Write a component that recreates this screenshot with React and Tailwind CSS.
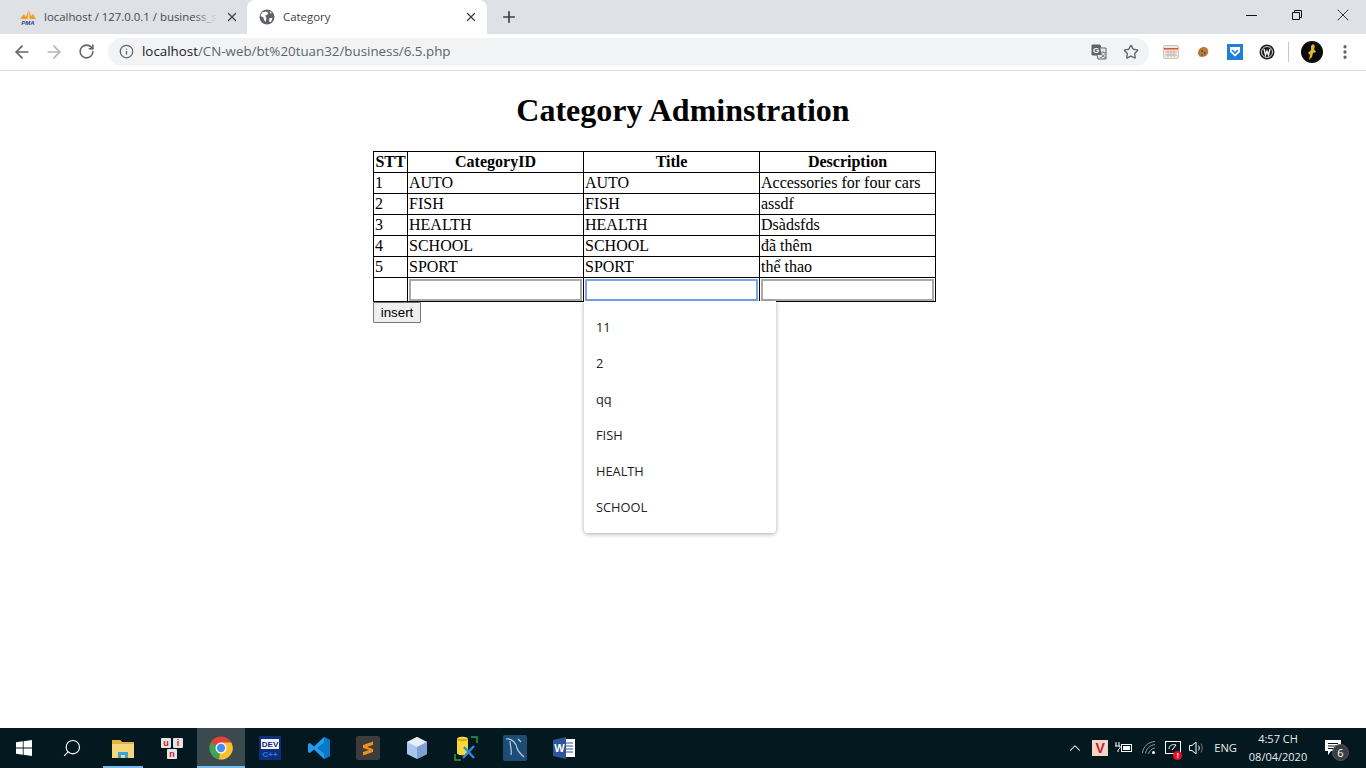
import { ArrowLeft, ArrowRight, ChevronUp, EllipsisVertical, Info, Plus, RotateCw, Search, Star, X } from "lucide-react"

const uiFont = "font-['Open_Sans','Noto_Sans',sans-serif]"

const rows = [
    ["1", "AUTO", "AUTO", "Accessories for four cars"],
    ["2", "FISH", "FISH", "assdf"],
    ["3", "HEALTH", "HEALTH", "Dsàdsfds"],
    ["4", "SCHOOL", "SCHOOL", "đã thêm"],
    ["5", "SPORT", "SPORT", "thể thao"],
]

const suggestions = ["11", "2", "qq", "FISH", "HEALTH", "SCHOOL"]

const PmaIcon = () => (
    <svg width="18" height="16" viewBox="0 0 18 16">
        <path d="M1 10 L5 5 L7 8 L9.5 1 L12 7 L14 5 L17 10 Z" fill="#f29a2e" />
        <path d="M9.5 1 L8.5 10 L11 10 Z" fill="#fbd38a" />
        <text x="9" y="15.5" textAnchor="middle" fontSize="6" fontWeight="700" fontStyle="italic" fill="#24488f" fontFamily="Liberation Sans">PMA</text>
    </svg>
)

const GlobeIcon = () => (
    <svg width="16" height="16" viewBox="0 0 16 16">
        <circle cx="8" cy="8" r="7.5" fill="#5f6368" />
        <path d="M3 3.5 L7 2.5 L9.5 4 L8 6 L6 6.5 L7.5 9 L6.5 13 L5 11 L4.5 8.5 L1.5 7 Z M10.5 9 L13.5 9 L12 13 L10 12.5 Z M10.5 2 L13 4 L11.5 4.5 Z" fill="#fff" />
    </svg>
)

const TranslateIcon = () => (
    <svg width="16" height="16" viewBox="0 0 16 16">
        <path d="M1 1 H9 L10 4 H15 V15 H7 L6 11 H1 Z" fill="#e8eaed" stroke="#5f6368" />
        <path d="M1 1 H9 L10.5 11 H1 Z" fill="#5f6368" />
        <text x="5" y="9" textAnchor="middle" fontSize="8" fontWeight="700" fill="#fff" fontFamily="Liberation Sans">G</text>
        <text x="12" y="13" textAnchor="middle" fontSize="7" fill="#5f6368" fontFamily="Noto Sans CJK SC">文</text>
    </svg>
)

const Keyboard = () => (
    <svg width="16" height="16" viewBox="0 0 16 16">
        <rect x="0.5" y="1.5" width="15" height="13" rx="1.5" fill="#eeeae2" stroke="#c9c5bd" />
        <rect x="1" y="4" width="14" height="1.5" fill="#e8502a" />
        <path d="M2 8 H14 M2 11 H14 M5 6 V13 M8 6 V13 M11 6 V13" stroke="#bdb9b0" />
    </svg>
)

const Cookie = () => (
    <svg width="14" height="14" viewBox="0 0 14 14">
        <path d="M2 8 C2 4 5 2 8 2 C11 2 13 5 12 8 C11 11 8 12 6 12 C4 12 2 11 2 8 Z" fill="#b87a3f" />
        <circle cx="6" cy="6" r="1" fill="#6e4420" />
        <circle cx="9" cy="8" r="1" fill="#6e4420" />
        <circle cx="6" cy="10" r="0.8" fill="#6e4420" />
    </svg>
)

const Pocket = () => (
    <svg width="16" height="16" viewBox="0 0 16 16">
        <rect width="16" height="16" fill="#1e7fdb" />
        <path d="M3 3 H13 V8 L8 12.5 L3 8 Z" fill="#fff" />
        <path d="M5 6 L8 9 L11 6" fill="none" stroke="#1e7fdb" strokeWidth="1.6" />
    </svg>
)

const WIcon = () => (
    <svg width="16" height="16" viewBox="0 0 16 16">
        <circle cx="8" cy="8" r="7.5" fill="#1c1c1c" />
        <circle cx="8" cy="8" r="5.5" fill="none" stroke="#d5d5d5" />
        <path d="M5 5 L6.5 11 L8 7 L9.5 11 L11 5" fill="none" stroke="#fff" strokeWidth="1.3" />
    </svg>
)

const Avatar = () => (
    <svg width="22" height="22" viewBox="0 0 22 22">
        <circle cx="11" cy="11" r="11" fill="#0b0b0b" />
        <path d="M12 3 L14 5 L13 8 L15 11 L12 12 L11 16 L8 19 L9 14 L7 12 L10 9 L10 5 Z" fill="#e2b52c" />
    </svg>
)

const RestoreIcon = () => (
    <svg width="10" height="10" viewBox="0 0 10 10" fill="none" stroke="#111" strokeWidth="1">
        <path d="M0.5 2.5 H7.5 V9.5 H0.5 Z M2.5 2.5 V0.5 H9.5 V7.5 H7.5" />
    </svg>
)

const WindowsLogo = () => (
    <svg width="16" height="16" viewBox="0 0 16 16" fill="#fff">
        <path d="M0 2.3 L6.8 1.3 V7.6 H0 Z M7.6 1.2 L16 0 V7.6 H7.6 Z M0 8.4 H6.8 V14.7 L0 13.7 Z M7.6 8.4 H16 V16 L7.6 14.8 Z" />
    </svg>
)

const FolderIcon = () => (
    <svg width="22" height="20" viewBox="0 0 22 20">
        <path d="M0 2 H8 L10 4 H22 V20 H0 Z" fill="#f6d67a" />
        <path d="M0 2 H8 L10 4 H22 V6 H0 Z" fill="#e4b13f" />
        <path d="M6 20 V14 H16 V20 H13 V17 H9 V20 Z" fill="#37a3dd" />
    </svg>
)

const UniKeyIcon = () => (
    <svg width="24" height="24" viewBox="0 0 24 24">
        <rect x="1" y="2" width="10" height="10" rx="1" fill="#e5e5e5" />
        <rect x="13" y="2" width="10" height="10" rx="1" fill="#e5e5e5" />
        <rect x="7" y="13" width="10" height="10" rx="1" fill="#e5e5e5" />
        <text x="6" y="10" textAnchor="middle" fontSize="9" fontWeight="700" fill="#c3202a" fontFamily="Liberation Sans">u</text>
        <text x="18" y="10" textAnchor="middle" fontSize="9" fontWeight="700" fill="#c3202a" fontFamily="Liberation Sans">i</text>
        <text x="12" y="21" textAnchor="middle" fontSize="9" fontWeight="700" fill="#c3202a" fontFamily="Liberation Sans">n</text>
    </svg>
)

const ChromeIcon = () => (
    <svg width="24" height="24" viewBox="0 0 24 24">
        <circle cx="12" cy="12" r="11.5" fill="#e5423a" />
        <path d="M12 12 L1.8 6.7 A11.5 11.5 0 0 0 10 23.3 Z" fill="#3aa757" />
        <path d="M12 6.5 H22.3 A11.5 11.5 0 0 1 10 23.3 L12 12 Z" fill="#fbc02d" />
        <circle cx="12" cy="12" r="5.5" fill="#fff" />
        <circle cx="12" cy="12" r="4.2" fill="#4a8af4" />
    </svg>
)

const DevIcon = () => (
    <svg width="22" height="24" viewBox="0 0 22 24">
        <rect width="22" height="24" fill="#0f2f7c" />
        <rect x="2" y="3" width="18" height="10" fill="#f1f3f8" />
        <text x="11" y="11" textAnchor="middle" fontSize="8" fontWeight="700" fill="#0f2f7c" fontFamily="Liberation Sans">DEV</text>
        <text x="11" y="21" textAnchor="middle" fontSize="8" fontWeight="700" fill="#2b7fe6" fontFamily="Liberation Sans">C++</text>
    </svg>
)

const VsCodeIcon = () => (
    <svg width="24" height="24" viewBox="0 0 24 24">
        <path d="M17 1 L23 4 V20 L17 23 L7 13.5 L3 17 L1 16 V8 L3 7 L7 10.5 Z M17 7 L11 12 L17 17 Z" fill="#1f9cf0" />
        <path d="M17 1 L23 4 V20 L17 23 Z M17 7 V17 L11 12 Z" fill="#0a78c9" fillRule="evenodd" />
    </svg>
)

const SublimeIcon = () => (
    <svg width="24" height="24" viewBox="0 0 24 24">
        <rect width="24" height="24" rx="2" fill="#3c3c3c" />
        <path d="M7 9 L17 5.5 V9 L11 11 L17 13 V16 L7 19.5 V16 L13 14 L7 12 Z" fill="#f28c1c" />
    </svg>
)

const CubeIcon = () => (
    <svg width="22" height="24" viewBox="0 0 22 24">
        <path d="M11 1 L21 6 V18 L11 23 L1 18 V6 Z" fill="#a9c6ee" />
        <path d="M11 1 L21 6 L11 11 L1 6 Z" fill="#e6eff5" />
        <path d="M11 11 L21 6 V18 L11 23 Z" fill="#7f9fd6" />
    </svg>
)

const DbToolIcon = () => (
    <svg width="24" height="26" viewBox="0 0 24 26">
        <path d="M3 4 C3 1 14 1 14 4 V18 C14 21 3 21 3 18 Z" fill="#f5d93c" />
        <path d="M3 4 C3 7 14 7 14 4" fill="#d3a82a" />
        <path d="M17 2 H23 V8 M1 19 V25 H7" fill="none" stroke="#2c9b47" strokeWidth="1.5" />
        <path d="M9 23 L20 11 M10 12 L20 23" stroke="#2b8ad8" strokeWidth="2.4" />
    </svg>
)

const WorkbenchIcon = () => (
    <svg width="24" height="26" viewBox="0 0 24 26">
        <rect width="24" height="26" rx="2" fill="#1d4c74" />
        <path d="M3 4 C9 3 13 8 14 13 C15 17 18 19 21 22 M7 6 C7 11 9 14 8 20 M15 4 L18 7" fill="none" stroke="#b9cfe0" strokeWidth="1.2" />
    </svg>
)

const WordIcon = () => (
    <svg width="22" height="22" viewBox="0 0 22 22">
        <rect x="8" y="2" width="14" height="18" fill="#fff" />
        <path d="M12 6 H20 M12 9 H20 M12 12 H20 M12 15 H20" stroke="#2b5797" />
        <path d="M0 3 L13 0 V22 L0 19 Z" fill="#2b5797" />
        <text x="6.5" y="15" textAnchor="middle" fontSize="11" fontWeight="700" fill="#fff" fontFamily="Liberation Sans">W</text>
    </svg>
)

const BatteryIcon = () => (
    <svg width="18" height="14" viewBox="0 0 18 14" fill="none" stroke="#fff">
        <path d="M1 1 V5 M4 1 V5 M0 5 H5 V7 L3 9 V11" />
        <rect x="6.5" y="3.5" width="10" height="7" />
        <rect x="8" y="5" width="7" height="4" fill="#fff" stroke="none" />
    </svg>
)

const WifiIcon = () => (
    <svg width="14" height="14" viewBox="0 0 14 14" fill="none" stroke="#8f9a9e">
        <path d="M0.5 12 C1 6 6 1 13 0.5 M3.5 12.5 C4 8 8 4 13 3.5 M6.5 13 C7 10.5 9.5 7.5 13 7" />
        <circle cx="11.5" cy="11.5" r="1.5" fill="#fff" stroke="none" />
    </svg>
)

const DisplayAlertIcon = () => (
    <span className="relative flex">
        <svg width="16" height="15" viewBox="0 0 16 15" fill="none" stroke="#fff">
            <rect x="0.5" y="0.5" width="15" height="12" />
            <path d="M4 8 C4 4 8 3 11 4 M7 9 L11 4" />
        </svg>
        <span className="absolute right-[-1px] bottom-[-4px] flex h-[9px] w-[9px] items-center justify-center rounded-full bg-[#e81123] text-[7px] font-bold leading-none text-white">!</span>
    </span>
)

const VolumeIcon = () => (
    <svg width="16" height="14" viewBox="0 0 16 14" fill="none" stroke="#fff">
        <path d="M0.5 4.5 H3 L7 1 V13 L3 9.5 H0.5 Z" />
        <path d="M9.5 4.5 C10.5 6 10.5 8 9.5 9.5" />
        <path d="M12 2.5 C13.5 5 13.5 9 12 11.5" stroke="#6d7a7f" />
    </svg>
)

const Tab = ({ icon, title, active = false }) => (
    <div className={`relative flex h-[34px] w-[240px] shrink-0 items-center rounded-t-lg ${active ? "bg-white pl-[8px] pr-[9px]" : "bg-[#dee1e6] pl-[12px] pr-[5px]"}`}>
        <span className="flex w-[24px] shrink-0 justify-center">{icon}</span>
        <span className={`ml-[4px] min-w-0 flex-1 whitespace-nowrap text-[11.4px] ${active ? "text-[#3c4043]" : "text-[#45494d]"}`}>{title}</span>
        {!active && <span className="absolute left-[188px] top-0 h-full w-[32px] bg-gradient-to-r from-transparent to-[#dee1e6] to-80%" />}
        <X size={14} strokeWidth={2.2} className="relative ml-[4px] shrink-0 text-[#3c4043]" />
    </div>
)

const TaskIcon = ({ children, active = false, open = false, width = "w-[49px]" }) => (
    <div className={`relative flex h-full shrink-0 items-center justify-center ${width} ${active ? "bg-[#3a4a4e]" : ""}`}>
        {children}
        {(active || open) && <span className="absolute inset-x-0 bottom-0 h-[2px] bg-[#76b9ed]" />}
    </div>
)

const App = () => (
    <div className={`flex h-screen w-full flex-col overflow-hidden bg-white ${uiFont}`}>
        {/* tab strip */}
        <div className="flex h-[34px] shrink-0 items-center bg-[#dee1e6] pl-[4px]">
            <Tab icon={<PmaIcon />} title="localhost / 127.0.0.1 / business_se" />
            <span className="w-[3px] shrink-0" />
            <Tab active icon={<GlobeIcon />} title="Category" />
            <Plus size={18} strokeWidth={2.2} className="ml-[13px] text-[#3c4043]" />
            <div className="ml-auto flex h-full items-start">
                <div className="flex h-[30px] w-[46px] items-center justify-center"><span className="h-px w-[11px] bg-[#111]" /></div>
                <div className="flex h-[30px] w-[46px] items-center justify-center"><RestoreIcon /></div>
                <div className="flex h-[30px] w-[46px] items-center justify-center"><X size={20} strokeWidth={1} className="text-[#111]" /></div>
            </div>
        </div>

        {/* toolbar */}
        <div className="flex h-[37px] shrink-0 items-center border-b border-[#dadce0] bg-white pb-[1px] pl-[12px] pr-[12px]">
            <ArrowLeft size={20} strokeWidth={2} className="text-[#5f6368]" />
            <ArrowRight size={20} strokeWidth={2} className="ml-[12px] text-[#b3b6ba]" />
            <RotateCw size={17} strokeWidth={2.2} className="ml-[14px] text-[#5f6368]" />
            <div className="ml-[13px] flex h-[28px] w-[1041px] shrink-0 items-center rounded-full bg-[#f1f3f4] pl-[11px] pr-[10px]">
                <Info size={15} strokeWidth={2} className="shrink-0 text-[#5f6368]" />
                <span className="ml-[8px] pt-px text-[13.35px] leading-none text-[#5f6368]"><span className="text-[#202124]">localhost</span>/CN-web/bt%20tuan32/business/6.5.php</span>
                <span className="ml-auto flex items-center gap-[16px]">
                    <TranslateIcon />
                    <Star size={16} strokeWidth={2} className="text-[#5f6368]" />
                </span>
            </div>
            <div className="ml-[14px] flex items-center gap-[16px]">
                <Keyboard />
                <span className="flex w-[16px] justify-center"><Cookie /></span>
                <Pocket />
                <WIcon />
            </div>
            <span className="ml-[13px] h-[20px] w-px bg-[#c4c7ca]" />
            <span className="ml-[12px] flex"><Avatar /></span>
            <EllipsisVertical size={18} strokeWidth={2.4} className="ml-[13px] text-[#5f6368]" />
        </div>

        {/* page */}
        <main className="relative flex-1 font-['Liberation_Serif',serif] text-[16px] leading-[18px] text-black">
            <h1 className="mt-[21px] mb-[22px] text-center text-[32px] font-bold leading-[37px]">Category Adminstration</h1>
            <div className="ml-[373px] w-[563px]">
                <table className="w-[562px] table-fixed border-collapse border border-black">
                    <colgroup>
                        <col className="w-[34px]" />
                        <col className="w-[176px]" />
                        <col className="w-[176px]" />
                        <col className="w-[176px]" />
                    </colgroup>
                    <thead>
                        <tr className="h-[21px]">
                            {["STT", "CategoryID", "Title", "Description"].map((head) => (
                                <th key={head} className="border border-black p-0 px-px text-center font-bold">{head}</th>
                            ))}
                        </tr>
                    </thead>
                    <tbody>
                        {rows.map((row) => (
                            <tr key={row[0]} className="h-[21px]">
                                {row.map((cell, i) => (
                                    <td key={i} className="border border-black p-0 px-px">{cell}</td>
                                ))}
                            </tr>
                        ))}
                        <tr className="h-[24px]">
                            <td className="border border-black p-0" />
                            <td className="border border-black p-0 px-px"><input className="block h-[22px] w-full border-2 border-[#a9a9a9] bg-white outline-none" /></td>
                            <td className="border border-black p-0 px-px"><input className="block h-[22px] w-full rounded-[1px] border-2 border-[#7ba4e8] bg-white outline-none" /></td>
                            <td className="border border-black p-0 px-px"><input className="block h-[22px] w-full border-2 border-[#a9a9a9] bg-white outline-none" /></td>
                        </tr>
                    </tbody>
                </table>
                <button type="button" className="block h-[21px] w-[48px] rounded-[1px] border border-[#767676] bg-[#efefef] font-['Liberation_Sans',sans-serif] text-[13.33px] leading-none text-black">insert</button>
            </div>

            {/* autofill suggestions */}
            <div className="absolute left-[584px] top-[230px] w-[192px] rounded-b-[4px] bg-white py-[8px] shadow-[0_1px_4px_rgba(60,64,67,0.45)]">
                {suggestions.map((item) => (
                    <div key={item} className={`flex h-[36px] items-center pl-[12px] text-[12.8px] text-[#202124] ${uiFont}`}>{item}</div>
                ))}
            </div>
        </main>

        {/* taskbar */}
        <div className="flex h-[40px] shrink-0 items-center bg-[#04181f]">
            <TaskIcon width="w-[48px]"><WindowsLogo /></TaskIcon>
            <TaskIcon width="w-[48px]"><Search size={20} strokeWidth={1.4} className="-scale-x-100 text-white" /></TaskIcon>
            <span className="w-[7px] shrink-0" />
            <TaskIcon open width="w-[40px]"><FolderIcon /></TaskIcon>
            <span className="w-[5px] shrink-0" />
            <TaskIcon width="w-[48px]"><UniKeyIcon /></TaskIcon>
            <span className="w-px shrink-0" />
            <TaskIcon active width="w-[48px]"><ChromeIcon /></TaskIcon>
            <TaskIcon><DevIcon /></TaskIcon>
            <TaskIcon><VsCodeIcon /></TaskIcon>
            <TaskIcon><SublimeIcon /></TaskIcon>
            <TaskIcon><CubeIcon /></TaskIcon>
            <TaskIcon><DbToolIcon /></TaskIcon>
            <TaskIcon><WorkbenchIcon /></TaskIcon>
            <TaskIcon><WordIcon /></TaskIcon>

            <div className="ml-auto flex h-full items-center text-white">
                <ChevronUp size={18} strokeWidth={1.4} />
                <span className="ml-[8px] flex h-[16px] w-[16px] items-center justify-center bg-[#f3d6c8] font-['Liberation_Sans',sans-serif] text-[14px] font-bold leading-none text-[#c8222a]">V</span>
                <span className="ml-[7px] flex"><BatteryIcon /></span>
                <span className="ml-[9px] flex"><WifiIcon /></span>
                <span className="ml-[9px] flex"><DisplayAlertIcon /></span>
                <span className="ml-[8px] flex"><VolumeIcon /></span>
                <span className="ml-[9px] text-[11.2px] text-[#e8ecee]">ENG</span>
                <div className="ml-[12px] flex w-[58px] flex-col items-center text-[11px] leading-[18px] text-[#e8ecee]">
                    <span>4:57 CH</span>
                    <span>08/04/2020</span>
                </div>
                <div className="relative ml-[18px] mr-[25px] flex h-[16px] w-[16px]">
                    <svg width="16" height="15" viewBox="0 0 16 15">
                        <path d="M0 0 H16 V11 H6 L3 15 V11 H0 Z" fill="#fff" />
                        <path d="M3 3.5 H13 M3 6 H13 M3 8.5 H10" stroke="#04181f" />
                    </svg>
                    <span className="absolute left-[7px] top-[4px] flex h-[17px] w-[17px] items-center justify-center rounded-full border border-[#555] bg-[#3a3f42] text-[11px] leading-none text-white">6</span>
                </div>
            </div>
        </div>
    </div>
)

export default App
